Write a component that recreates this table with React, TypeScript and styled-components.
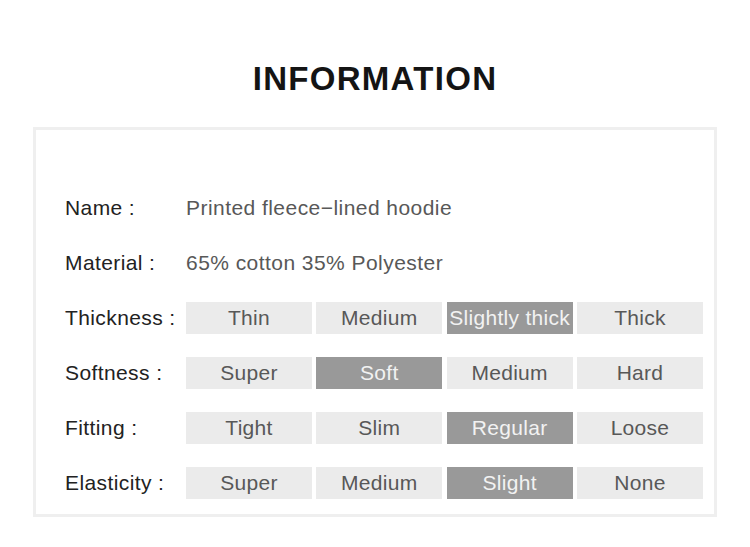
import React from "react";
import styled, { createGlobalStyle } from "styled-components";

const Global = createGlobalStyle`
  html, body { margin: 0; padding: 0; background: #ffffff; }
  body { font-family: "Liberation Sans", Arial, sans-serif; }
`;

const Page = styled.div`
  width: 750px;
  height: 547px;
  background: #fff;
  display: flex;
  flex-direction: column;
  align-items: flex-start;
`;

const Title = styled.h1`
  margin: 0;
  align-self: center;
  padding-top: 59px;
  height: 127px;
  box-sizing: border-box;
  font-size: 33px;
  line-height: 40px;
  font-weight: 700;
  letter-spacing: 1.3px;
  color: #141414;
  text-align: center;
`;

const Card = styled.div`
  margin-left: 33px;
  width: 684px;
  height: 390px;
  box-sizing: border-box;
  border: 3px solid #efefef;
  padding: 62px 0 0 29px;
  display: flex;
  flex-direction: column;
  gap: 23px;
`;

const Row = styled.div`
  display: grid;
  grid-template-columns: 121px 517px;
  height: 32px;
  align-items: center;
`;

const Label = styled.div`
  font-size: 21px;
  letter-spacing: 0.4px;
  color: #222;
  white-space: nowrap;
`;

const Value = styled.div`
  font-size: 21px;
  letter-spacing: 0.45px;
  color: #585858;
  white-space: nowrap;
`;

const Options = styled.div`
  display: grid;
  grid-template-columns: repeat(4, 1fr);
  column-gap: 4.33px;
  height: 32px;
`;

const Option = styled.div<{ $active?: boolean }>`
  background: ${(p) => (p.$active ? "#999999" : "#ebebeb")};
  color: ${(p) => (p.$active ? "#f2f2f2" : "#585858")};
  font-size: 21px;
  letter-spacing: 0.3px;
  display: flex;
  align-items: center;
  justify-content: center;
  white-space: nowrap;
`;

const rows: { label: string; value?: string; options?: string[]; active?: number }[] = [
  { label: "Name :", value: "Printed fleece\u2212lined hoodie" },
  { label: "Material :", value: "65% cotton 35% Polyester" },
  { label: "Thickness :", options: ["Thin", "Medium", "Slightly thick", "Thick"], active: 2 },
  { label: "Softness :", options: ["Super", "Soft", "Medium", "Hard"], active: 1 },
  { label: "Fitting :", options: ["Tight", "Slim", "Regular", "Loose"], active: 2 },
  { label: "Elasticity :", options: ["Super", "Medium", "Slight", "None"], active: 2 },
];

export default function App() {
  return (
    <Page>
      <Global />
      <Title>INFORMATION</Title>
      <Card>
        {rows.map((r) => (
          <Row key={r.label}>
            <Label>{r.label}</Label>
            {r.options ? (
              <Options>
                {r.options.map((o, i) => (
                  <Option key={o} $active={i === r.active}>
                    {o}
                  </Option>
                ))}
              </Options>
            ) : (
              <Value>{r.value}</Value>
            )}
          </Row>
        ))}
      </Card>
    </Page>
  );
}
